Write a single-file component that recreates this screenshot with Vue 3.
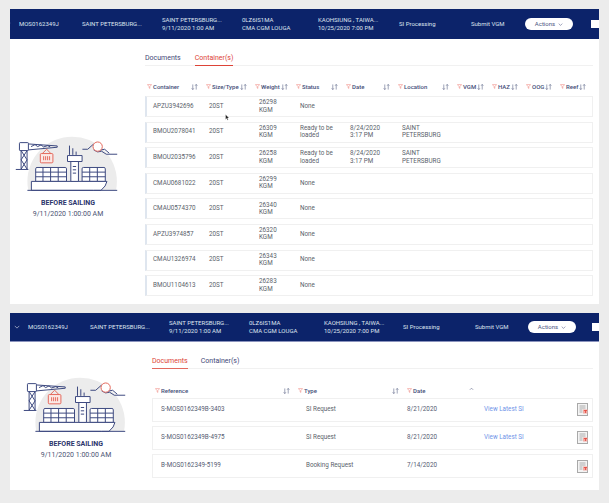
<template>
  <div class="page">
    <section v-for="p in panels" :key="p.id" class="panel" :class="p.id">
      <header class="topbar">
        <svg class="chev" viewBox="0 0 8 5"><path d="M1 1l3 3 3-3" /></svg>
        <div class="bar-grid">
          <span>MOS0162349J</span>
          <span>SAINT PETERSBURG...</span>
          <span>SAINT PETERSBURG...<br>9/11/2020 1:00 AM</span>
          <span>0LZ6IS1MA<br>CMA CGM LOUGA</span>
          <span>KAOHSIUNG , TAIWA...<br>10/25/2020 7:00 PM</span>
          <span>SI Processing</span>
          <span>Submit VGM</span>
          <button class="actions">Actions
            <svg viewBox="0 0 8 5"><path d="M1 1l3 3 3-3" /></svg>
          </button>
          <i class="check"></i>
        </div>
      </header>

      <div class="body">
        <aside class="status">
          <svg class="ship" viewBox="45 45 325 175">
            <defs>
              <clipPath :id="'g' + p.id"><rect x="45" y="45" width="325" height="167" /></clipPath>
            </defs>
            <circle cx="220" cy="185" r="135" fill="#ececec" :clip-path="'url(#g' + p.id + ')'" />
            <g fill="none" stroke="#3d4a80" stroke-width="3">
              <rect x="61" y="68" width="27" height="24" rx="2" fill="#fff" />
              <path d="M88 72l87 6v4l-87 8M96 80l12-6 8 6 10-5 8 6 12-4 8 4" />
              <path d="M66 92v56M84 92v56M66 92l18 28-18 28M84 92l-18 28 18 28M50 149h38" />
              <path d="M110 185v-38q0-4 4-4h85q4 0 4 4v38z" fill="#fff" />
              <path d="M250 185v-38q0-4 4-4h62q4 0 4 4v38z" fill="#fff" />
              <path d="M110 157h93M110 171h93M132 143v42M155 143v42M178 143v42" />
              <path d="M250 157h70M250 171h70M273 143v42M296 143v42" />
              <path d="M97 212v-27h228q-2 14-18 27z" fill="#fff" />
              <path d="M85 212h198M284 212h72" />
              <path d="M216 185v-60h23v60z" fill="#fff" />
              <path d="M206 125v-18h44v18z" fill="#fff" />
              <path d="M212 105v-28M222 105v-20M232 105v-10M222 140h10M222 150h10M222 160h10" />
              <path d="M251 88h16l18-16M285 90l12 6 12-2 14 9h33M298 92l20-4 14 12" />
            </g>
            <g fill="none" stroke="#e4695c" stroke-width="3">
              <circle cx="297" cy="80" r="14" fill="#fff" />
              <rect x="124" y="101" width="38" height="28" rx="3" fill="#fbe9e6" />
              <path d="M130 101l13-13 13 13M134 109v12M140 109v12M146 109v12M152 109v12" />
            </g>
          </svg>
          <strong>BEFORE SAILING</strong>
          <span>9/11/2020 1:00:00 AM</span>
        </aside>

        <div class="content">
          <nav class="tabs">
            <a :class="{ on: p.tab === 'Documents' }">Documents</a>
            <a :class="{ on: p.tab === 'Container(s)' }">Container(s)</a>
          </nav>

          <template v-if="p.id === 'containers'">
            <div class="heads heads-c">
              <div v-for="h in containerHeads" :key="h" class="head">
                <svg class="funnel" viewBox="0 0 6 6"><path d="M.5.7h5L3.4 3.2V5.4L2.6 4.8V3.2z" /></svg>
                <span>{{ h }}</span>
                <svg class="sort" viewBox="0 0 8 7"><path d="M2 .5v6M.7 5l1.3 1.5L3.3 5M6 6.500v-6M4.700 2L6 .5 7.300 2" /></svg>
              </div>
            </div>
            <div v-for="r in containers" :key="r.id" class="row row-c">
              <span>{{ r.id }}</span>
              <span>20ST</span>
              <span>{{ r.weight }}<br>KGM</span>
              <span class="st">{{ r.status }}</span>
              <span v-if="r.date">8/24/2020<br>3:17 PM</span>
              <span v-if="r.date">SAINT<br>PETERSBURG</span>
            </div>
            <svg class="cursor" viewBox="0 0 6 9"><path d="M.5.5v6.500l1.500-1.300 1 2.300 1-.5-1-2.200h2z" /></svg>
          </template>

          <template v-else>
            <div class="heads heads-d">
              <div v-for="h in docHeads" :key="h" class="head">
                <svg class="funnel" viewBox="0 0 6 6"><path d="M.5.7h5L3.400 3.200V5.400L2.600 4.800V3.200z" /></svg>
                <span>{{ h }}</span>
                <svg v-if="h !== 'Date'" class="sort" viewBox="0 0 8 7"><path d="M2 .5v6M.7 5l1.300 1.500L3.300 5M6 6.500v-6M4.700 2L6 .5 7.300 2" /></svg>
              </div>
              <svg class="caret" viewBox="0 0 6 4"><path d="M1 3l2-2 2 2" /></svg>
            </div>
            <div v-for="r in documents" :key="r.ref" class="row row-d">
              <span class="strong">{{ r.ref }}</span>
              <span>{{ r.type }}</span>
              <span class="strong">{{ r.date }}</span>
              <a>{{ r.link }}</a>
              <svg class="doc" viewBox="0 0 11 13">
                <rect x=".5" y=".5" width="10" height="12" fill="#f4f4f4" stroke="#a9a9a9" />
                <path d="M2.500 3h6M2.500 5h6M2.500 7h3M2.500 9h3" stroke="#8d8d8d" fill="none" stroke-width=".7" />
                <path d="M6 6.500h4.500v4H6z" fill="#f3a9a2" />
                <path d="M7 7.500h3M8.500 7.500v2.500" stroke="#e2453a" stroke-width=".8" fill="none" />
              </svg>
            </div>
          </template>
        </div>
      </div>
    </section>
  </div>
</template>

<script setup>
const panels = [
  { id: 'containers', tab: 'Container(s)' },
  { id: 'documents', tab: 'Documents' }
]

const containerHeads = ['Container', 'Size/Type', 'Weight', 'Status', 'Date', 'Location', 'VGM', 'HAZ', 'OOG', 'Reef']
const docHeads = ['Reference', 'Type', 'Date']

const containers = [
  { id: 'APZU3942696', weight: 26298, status: 'None' },
  { id: 'BMOU2078041', weight: 26309, status: 'Ready to be loaded', date: true },
  { id: 'BMOU2035796', weight: 26258, status: 'Ready to be loaded', date: true },
  { id: 'CMAU0681022', weight: 26299, status: 'None' },
  { id: 'CMAU0574370', weight: 26340, status: 'None' },
  { id: 'APZU3974857', weight: 26320, status: 'None' },
  { id: 'CMAU1326974', weight: 26343, status: 'None' },
  { id: 'BMOU1104613', weight: 26283, status: 'None' }
]

const documents = [
  { ref: 'S-MOS0162349B-3403', type: 'SI Request', date: '8/21/2020', link: 'View Latest SI' },
  { ref: 'S-MOS0162349B-4975', type: 'SI Request', date: '8/21/2020', link: 'View Latest SI' },
  { ref: 'B-MOS0162349-5199', type: 'Booking Request', date: '7/14/2020', link: '' }
]
</script>

<style>
html, body {
  margin: 0;
  background: #ececec;
}
</style>

<style scoped>
.page {
  width: 609px;
  height: 503px;
  box-sizing: border-box;
  padding: 9px 10px 0;
  display: flex;
  flex-direction: column;
  gap: 9px;
  overflow: hidden;
  font-family: Roboto, "Liberation Sans", sans-serif;
  font-size: 6.300px;
  line-height: 7.300px;
  color: #5a5f6b;
}

.panel {
  background: #fff;
  overflow: hidden;
  display: flex;
  flex-direction: column;
}
.containers { height: 295px; }
.documents { height: 177px; }

.topbar {
  flex: none;
  height: 30px;
  background: #0c236a;
  color: #dfe3ef;
  display: flex;
  align-items: center;
  font-size: 6px;
  line-height: 8px;
}
.documents .topbar {
  height: 29px;
  border-bottom: 1px solid #8b93bd;
  box-sizing: border-box;
}
.chev {
  flex: none;
  width: 6px;
  height: 4px;
  margin-left: -5px;
  margin-right: 8px;
  fill: none;
  stroke: #dfe3ef;
  stroke-width: .8;
}
.documents .chev {
  margin-left: 4px;
}
.bar-grid {
  flex: 1;
  display: grid;
  grid-template-columns: 63px 80px 80px 76px 81px 72px 54px 48px 8px;
  align-items: center;
}
.documents .bar-grid {
  grid-template-columns: 62px 79px 80px 75px 79px 72px 53px 47px 8px;
}
.actions {
  width: 48px;
  height: 12px;
  padding: 0;
  border: 0;
  border-radius: 6px;
  background: #fff;
  color: #4a5480;
  font: inherit;
  display: flex;
  align-items: center;
  justify-content: center;
  gap: 3px;
}
.actions svg {
  width: 5px;
  height: 3px;
  fill: none;
  stroke: #4a5480;
  stroke-width: .9;
}
.check {
  display: block;
  width: 8px;
  height: 8px;
  margin-left: 18px;
  background: #fff;
}
.documents .check {
  margin-left: 17px;
}

.body {
  flex: 1;
  display: flex;
  min-height: 0;
}
.status {
  flex: none;
  width: 135px;
  box-sizing: border-box;
  display: flex;
  flex-direction: column;
  align-items: center;
  padding: 96px 19px 0 0;
  color: #4b5272;
}
.documents .status {
  width: 142px;
  padding: 34px 10px 0 0;
}
.status strong {
  margin-top: 5px;
  color: #2c356b;
  font-size: 7px;
  font-weight: 700;
  line-height: 10px;
}
.status span {
  margin-top: 1px;
  line-height: 11px;
  font-size: 7px;
}
.ship {
  flex: none;
  width: 108px;
  height: 58px;
}

.content {
  position: relative;
  flex: 1;
  margin-right: 6px;
  min-width: 0;
}
.tabs {
  display: flex;
  gap: 14px;
  height: 27px;
  box-sizing: border-box;
  border-bottom: 1px solid #f1f1f1;
  padding-top: 15px;
  font-size: 7px;
  color: #3f4877;
}
.documents .tabs {
  gap: 13px;
}
.tabs a {
  height: 11px;
  line-height: 8px;
}
.tabs .on {
  color: #dd4337;
  border-bottom: 1px solid #dd4337;
}
.documents .tabs .on {
  border-bottom: 1.500px solid #e2685e;
}

.heads {
  display: grid;
  align-items: center;
  margin-top: 17px;
  height: 8px;
  margin-bottom: 5px;
  color: #444d78;
  font-size: 6px;
}
.heads-c {
  grid-template-columns: 59px 49px 41px 50px 52px 59px 35px 34px 34px 32px;
  padding-left: 2px;
}
.heads-d {
  position: relative;
  grid-template-columns: 143px 109px 60px;
  padding-left: 3px;
  margin-top: 18px;
  margin-bottom: 3px;
}
.head {
  display: flex;
  align-items: center;
  gap: 1px;
  font-weight: 500;
}
.head .sort {
  margin-left: auto;
  margin-right: 8px;
}
.funnel {
  flex: none;
  width: 5px;
  height: 5px;
  fill: none;
  stroke: #ef8d86;
  stroke-width: .7;
}
.sort {
  flex: none;
  width: 7px;
  height: 6px;
  fill: none;
  stroke: #5e6688;
  stroke-width: .7;
}
.caret {
  position: absolute;
  left: 317px;
  top: 0;
  width: 5px;
  height: 4px;
  fill: none;
  stroke: #5e6688;
  stroke-width: .7;
}

.row {
  display: grid;
  align-items: center;
  box-sizing: border-box;
  background: #fff;
  border: 1px solid #f0f0f0;
  border-left: 2px solid #dfe6ef;
}
.row-c {
  grid-template-columns: 56px 50px 41px 50px 52px 1fr;
  height: 21px;
  margin-bottom: 4.600px;
  padding-left: 6px;
}
.st {
  max-width: 40px;
}
.row-d {
  grid-template-columns: 145px 101px 77px 93px 11px;
  height: 23.500px;
  margin-bottom: 4.700px;
  padding-left: 8px;
  border-left-color: #f0f0f0;
  border-left-width: 1px;
}
.strong {
  color: #565b72;
}
.row-d a {
  color: #6f94e8;
}
.doc {
  width: 11px;
  height: 13px;
}
.cursor {
  position: absolute;
  left: 80px;
  top: 75px;
  width: 5px;
  height: 7px;
  fill: #222;
  stroke: #fff;
  stroke-width: .4;
}
</style>
